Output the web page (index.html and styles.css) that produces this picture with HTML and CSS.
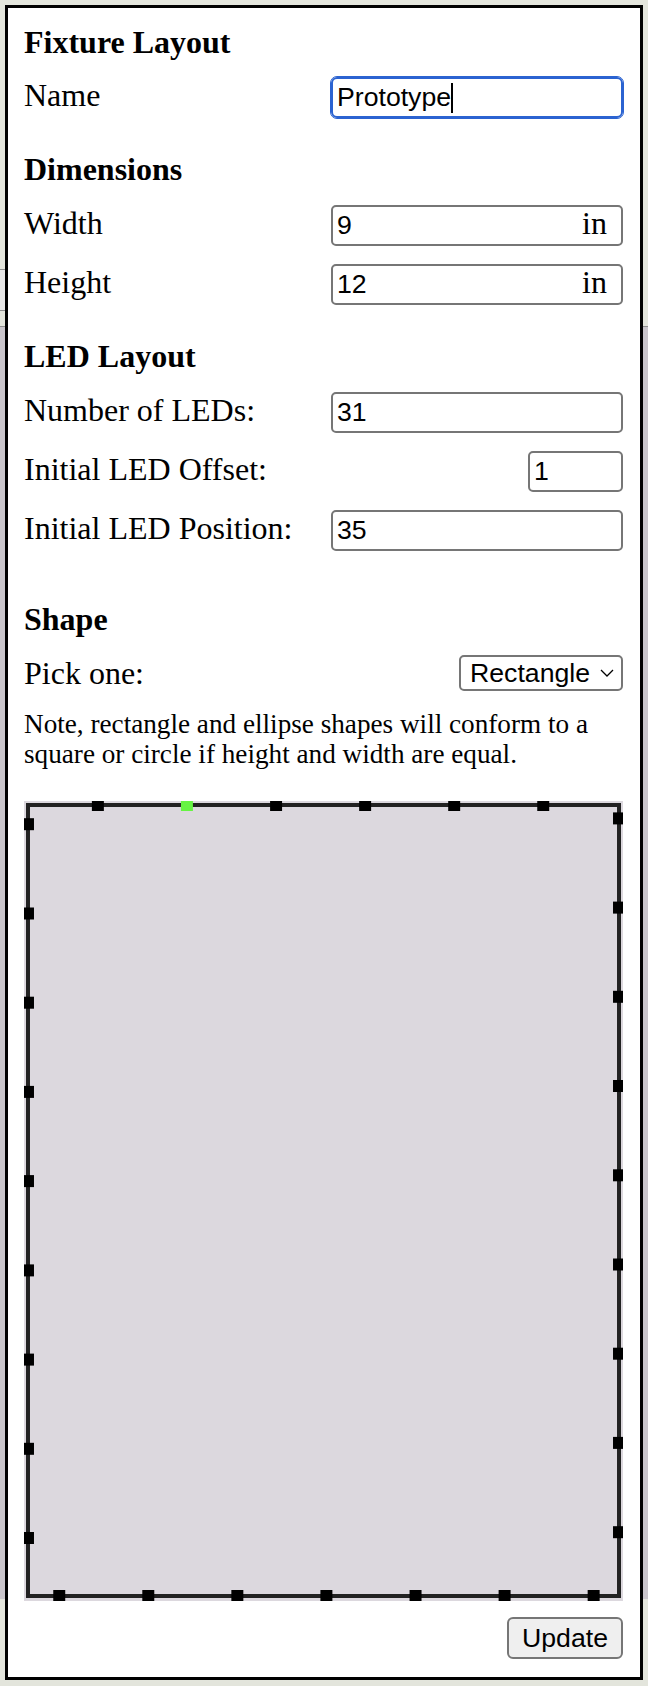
FILE: index.html
```html
<!DOCTYPE html>
<html lang="en">
<head>
<meta charset="utf-8">
<title>Fixture Layout</title>
<link rel="stylesheet" href="styles.css">
</head>
<body>
<div class="backdrop">
  <div class="bd-head"><div class="bd-tab"></div></div>
  <div class="bd-main"></div>
</div>

<section class="panel">
  <h2 class="section-title">Fixture Layout</h2>
  <div class="row row-first">
    <label class="label">Name</label>
    <div class="field-wrap">
      <input class="text-input is-focused" type="text" value="Prototype">
      <span class="caret"></span>
    </div>
  </div>

  <h2 class="section-title">Dimensions</h2>
  <div class="row">
    <label class="label">Width</label>
    <div class="unit-box">
      <input class="unit-input" type="text" value="9">
      <span class="unit">in</span>
    </div>
  </div>
  <div class="row">
    <label class="label">Height</label>
    <div class="unit-box">
      <input class="unit-input" type="text" value="12">
      <span class="unit">in</span>
    </div>
  </div>

  <h2 class="section-title">LED Layout</h2>
  <div class="row">
    <label class="label">Number of LEDs:</label>
    <input class="text-input" type="text" value="31">
  </div>
  <div class="row">
    <label class="label">Initial LED Offset:</label>
    <input class="text-input text-input-small" type="text" value="1">
  </div>
  <div class="row">
    <label class="label">Initial LED Position:</label>
    <input class="text-input" type="text" value="35">
  </div>

  <h2 class="section-title section-title-lg">Shape</h2>
  <div class="row row-center">
    <label class="label">Pick one:</label>
    <div class="select-wrap">
      <select class="select">
        <option selected>Rectangle</option>
        <option>Ellipse</option>
      </select>
      <svg class="chevron" width="14" height="8" viewBox="0 0 14 8" aria-hidden="true">
        <polyline points="1,1 7,7 13,1" fill="none" stroke="#000" stroke-width="1.3"/>
      </svg>
    </div>
  </div>

  <p class="note">Note, rectangle and ellipse shapes will conform to a square or circle if height and width are equal.</p>

  <svg class="preview" width="599" height="800" viewBox="0 0 600 800" preserveAspectRatio="none">
    <rect x="0" y="0" width="600" height="800" fill="#dcd8de"/>
    <rect x="4" y="4" width="592" height="791" fill="none" stroke="#222" stroke-width="4"/>
    <g fill="#000">
      <rect x="68" y="-2" width="12" height="12"/>
      <rect x="246.5" y="-2" width="12" height="12"/>
      <rect x="335.7" y="-2" width="12" height="12"/>
      <rect x="424.9" y="-2" width="12" height="12"/>
      <rect x="514.1" y="-2" width="12" height="12"/>

      <rect x="590" y="11.4" width="12" height="12"/>
      <rect x="590" y="100.6" width="12" height="12"/>
      <rect x="590" y="189.8" width="12" height="12"/>
      <rect x="590" y="279" width="12" height="12"/>
      <rect x="590" y="368.3" width="12" height="12"/>
      <rect x="590" y="457.5" width="12" height="12"/>
      <rect x="590" y="546.7" width="12" height="12"/>
      <rect x="590" y="635.9" width="12" height="12"/>
      <rect x="590" y="725.2" width="12" height="12"/>

      <rect x="564.6" y="789" width="12" height="12"/>
      <rect x="475.4" y="789" width="12" height="12"/>
      <rect x="386.2" y="789" width="12" height="12"/>
      <rect x="296.9" y="789" width="12" height="12"/>
      <rect x="207.7" y="789" width="12" height="12"/>
      <rect x="118.5" y="789" width="12" height="12"/>
      <rect x="29.3" y="789" width="12" height="12"/>

      <rect x="-2" y="731" width="12" height="12"/>
      <rect x="-2" y="641.8" width="12" height="12"/>
      <rect x="-2" y="552.6" width="12" height="12"/>
      <rect x="-2" y="463.4" width="12" height="12"/>
      <rect x="-2" y="374.1" width="12" height="12"/>
      <rect x="-2" y="284.9" width="12" height="12"/>
      <rect x="-2" y="195.7" width="12" height="12"/>
      <rect x="-2" y="106.5" width="12" height="12"/>
      <rect x="-2" y="17.2" width="12" height="12"/>
    </g>
    <rect x="157.2" y="-2" width="12" height="12" fill="#66f443"/>
  </svg>

  <button class="btn" type="button">Update</button>
</section>
</body>
</html>
```

FILE: styles.css
```css
html, body {
  margin: 0;
  padding: 0;
}

body {
  width: 648px;
  height: 1686px;
  background: #e3e5dc;
  font-family: "Liberation Serif", "Times New Roman", serif;
  color: #000;
  position: relative;
  overflow: hidden;
}

/* underlying application, partly visible behind the panel */
.backdrop {
  display: flex;
  flex-direction: column;
}

.bd-head {
  height: 327px;
  padding-top: 269px;
  box-sizing: border-box;
  border-bottom: 1px solid #8e8e8e;
  background: #e3e5dc;
}

.bd-tab {
  width: 80px;
  height: 42px;
  box-sizing: border-box;
  border-top: 1px solid #8e8e8e;
  border-bottom: 1px solid #8e8e8e;
  background: #e8e8e8;
}

.bd-main {
  height: 1272px;
  background: #c9c5cb;
}

/* dialog panel */
.panel {
  position: absolute;
  top: 5px;
  left: 5px;
  width: 638px;
  height: 1675px;
  box-sizing: border-box;
  border: 3px solid #000;
  background: #fff;
  padding: 16px 17px 16px 16px;
  display: flex;
  flex-direction: column;
}

.section-title {
  margin: 33px 0 0;
  font-size: 32px;
  line-height: 36px;
  font-weight: bold;
}

.section-title:first-child {
  margin-top: 0;
}

.section-title-lg {
  margin-top: 50px;
}

.row {
  display: flex;
  justify-content: space-between;
  align-items: baseline;
  margin-top: 18px;
}

.row-first {
  margin-top: 17px;
}

.row-center {
  align-items: center;
}

.label {
  font-size: 32px;
  line-height: 36px;
}

.field-wrap {
  position: relative;
  display: flex;
}

.text-input {
  width: 292px;
  height: 41px;
  box-sizing: border-box;
  border: 2px solid #767676;
  border-radius: 5px;
  padding: 0 4px;
  margin: 0;
  font-family: "Liberation Sans", Arial, sans-serif;
  font-size: 26.67px;
  color: #000;
  background: #fff;
  outline: none;
}

.text-input-small {
  width: 95px;
}

.text-input.is-focused {
  border-color: #2b63d1;
  border-radius: 6px;
  outline: 1px solid #2b63d1;
  outline-offset: 0;
}

.caret {
  position: absolute;
  left: 120px;
  top: 6px;
  width: 2px;
  height: 30px;
  background: #000;
}

.unit-box {
  width: 292px;
  height: 41px;
  box-sizing: border-box;
  border: 2px solid #767676;
  border-radius: 5px;
  background: #fff;
  display: flex;
  align-items: center;
}

.unit-input {
  flex: 1;
  min-width: 0;
  height: 37px;
  box-sizing: border-box;
  border: none;
  padding: 0 4px;
  margin: 0;
  font-family: "Liberation Sans", Arial, sans-serif;
  font-size: 26.67px;
  color: #000;
  background: transparent;
  outline: none;
}

.unit {
  font-size: 32px;
  line-height: 33px;
  padding-right: 14px;
  margin-bottom: 4px;
}

.select-wrap {
  position: relative;
  display: flex;
}

.select {
  appearance: none;
  -webkit-appearance: none;
  width: 164px;
  height: 36px;
  box-sizing: border-box;
  border: 2px solid #767676;
  border-radius: 5px;
  background: #fff;
  padding: 0 0 0 9px;
  margin: 0;
  font-family: "Liberation Sans", Arial, sans-serif;
  font-size: 26.67px;
  color: #000;
}

.chevron {
  position: absolute;
  right: 9px;
  top: 14px;
  pointer-events: none;
}

.note {
  margin: 18px 0 0;
  font-size: 27.2px;
  line-height: 30px;
}

.preview {
  display: block;
  margin-top: 32px;
  flex: none;
}

.btn {
  align-self: flex-end;
  margin-top: 16px;
  height: 42px;
  box-sizing: border-box;
  padding: 0 13px;
  border: 2px solid #767676;
  border-radius: 6px;
  background: #efefef;
  font-family: "Liberation Sans", Arial, sans-serif;
  font-size: 26.67px;
  color: #000;
}
```
